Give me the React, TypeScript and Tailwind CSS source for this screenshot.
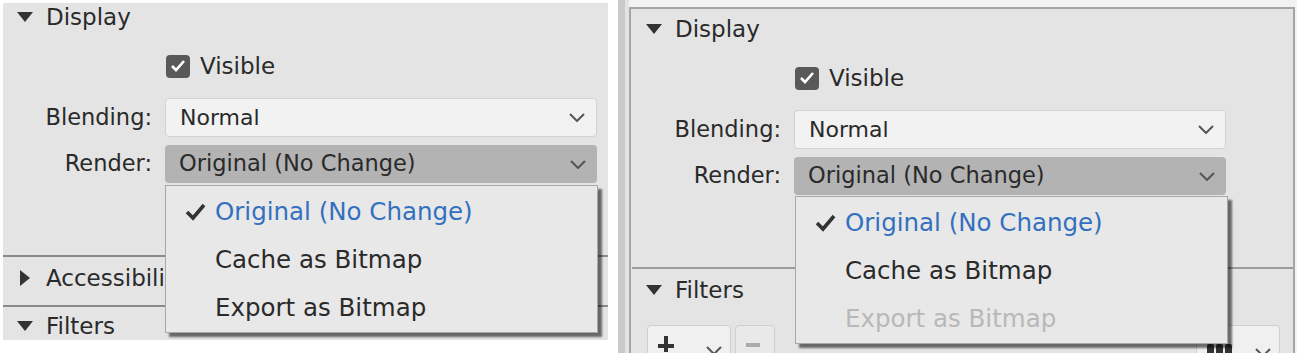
import React from 'react';

const font = { fontFamily: '"DejaVu Sans", Verdana, sans-serif' };

const DownTri = () => (
  <svg width="16" height="10" viewBox="0 0 16 10" className="shrink-0">
    <polygon points="0,0 16,0 8,10" fill="#333" />
  </svg>
);

const RightTri = () => (
  <svg width="10" height="16" viewBox="0 0 10 16" className="shrink-0 ml-[3px] mr-[3px]">
    <polygon points="0,0 10,8 0,16" fill="#333" />
  </svg>
);

const Chevron = () => (
  <svg width="16" height="9" viewBox="0 0 16 9" className="shrink-0">
    <polyline points="1,1 8,8 15,1" fill="none" stroke="#555" strokeWidth="2" />
  </svg>
);

const Header: React.FC<{ label: string; open?: boolean; className?: string }> = ({ label, open = true, className }) => (
  <div className={`flex items-center gap-[13px] pl-[14px] text-[23px] text-[#2a2a2a] ${className ?? ''}`}>
    {open ? <DownTri /> : <RightTri />}
    <span>{label}</span>
  </div>
);

interface PanelProps {
  right?: boolean;
}

const Panel: React.FC<PanelProps> = ({ right }) => {
  return (
    <div className={`relative ${right ? 'pt-[6px] pl-[1px]' : ''}`}>
      <Header label="Display" className="h-[28px]" />

      <div className="mt-[21px] h-[28px] flex items-center pl-[163px] gap-[10px]">
        <div className="w-[24px] h-[23px] rounded-[4px] bg-[#595959] flex items-center justify-center">
          <svg width="16" height="14" viewBox="0 0 16 14">
            <polyline points="2,7 6,11 14,2" fill="none" stroke="#fff" strokeWidth="2.6" />
          </svg>
        </div>
        <span className="text-[23px] text-[#2a2a2a]">Visible</span>
      </div>

      <div className="mt-[18px] flex items-center h-[39px]">
        <div className="w-[149px] text-right text-[22.5px] text-[#2a2a2a]">Blending:</div>
        <div className="ml-[13px] w-[432px] h-full rounded-[4px] border border-[#d2d2d2] bg-[#f2f2f2] flex items-center justify-between pl-[14px] pr-[11px] text-[22px] text-[#2a2a2a]">
          <span>Normal</span>
          <Chevron />
        </div>
      </div>

      <div className="mt-[8px] flex items-center h-[38px]">
        <div className="w-[149px] text-right text-[22.5px] text-[#2a2a2a]">Render:</div>
        <div className="ml-[13px] w-[432px] h-full rounded-[4px] bg-[#b3b3b3] flex items-center justify-between pl-[14px] pr-[11px] text-[22.5px] text-[#2a2a2a]">
          <span>Original (No Change)</span>
          <Chevron />
        </div>
      </div>

      <div className={`mt-[72px] border-t-2 ${right ? 'border-[#9c9c9c]' : 'border-[#8a8a8a]'}`} />

      {right ? (
        <>
          <Header label="Filters" className="h-[48px] pb-[6px]" />
          <div className="mt-[8px] flex items-start pl-[15px] pr-[13px]">
            <div className="w-[84px] h-[40px] rounded-[4px] border border-[#cfcfcf] bg-[#f0f0f0] flex items-start pt-[10px] pl-[10px] gap-[32px]">
              <svg width="16" height="16" viewBox="0 0 16 16">
                <rect x="6" y="0" width="4" height="16" fill="#333" />
                <rect x="0" y="8" width="16" height="4" fill="#333" />
              </svg>
              <div className="pt-[10px]">
                <Chevron />
              </div>
            </div>
            <div className="ml-[4px] w-[40px] h-[40px] rounded-[4px] border border-[#cfcfcf] bg-[#e9e9e9] flex items-start pt-[17px] pl-[10px]">
              <div className="w-[14px] h-[4px] bg-[#ababab]" />
            </div>
            <div className="ml-auto w-[84px] h-[40px] rounded-[4px] border border-[#cfcfcf] bg-[#f0f0f0] flex items-start pt-[18px] pl-[8px] gap-[22px]">
              <svg width="28" height="12" viewBox="0 0 28 12">
                <rect x="2" y="0" width="7" height="12" rx="2" fill="#333" />
                <rect x="11" y="0" width="7" height="12" rx="2" fill="#333" />
                <rect x="20" y="0" width="7" height="12" rx="2" fill="#333" />
              </svg>
              <div className="pt-[4px]">
                <Chevron />
              </div>
            </div>
          </div>
        </>
      ) : (
        <>
          <Header label="Accessibility" open={false} className="h-[48px] pb-[6px]" />
          <div className="border-t-2 border-[#8a8a8a]" />
          <Header label="Filters" className="h-[40px] pb-[2px]" />
        </>
      )}

      {/* open render dropdown */}
      <div
        className={`absolute w-[433px] pt-[2px] bg-[#e8e8e8] border border-[#a8a8a8] shadow-[4px_4px_2px_rgba(0,0,0,0.55)] text-[24.5px] ${
          right ? 'left-[164px] top-[187px]' : 'left-[162px] top-[182px]'
        }`}
      >
        <div className="h-[48px] flex items-center text-[#3370bf]">
          <div className="w-[49px] flex justify-end pr-[9px]">
            <svg width="21" height="18" viewBox="0 0 21 18">
              <polyline points="2,9 8,15 19,2" fill="none" stroke="#333" strokeWidth="3.6" />
            </svg>
          </div>
          <span>Original (No Change)</span>
        </div>
        <div className="h-[48px] flex items-center pl-[49px] text-[#2a2a2a]">Cache as Bitmap</div>
        <div className={`h-[48px] flex items-center pl-[49px] ${right ? 'text-[#b8b8b8]' : 'text-[#2a2a2a]'}`}>
          Export as Bitmap
        </div>
      </div>
    </div>
  );
};

const App: React.FC = () => {
  return (
    <div className="w-[1299px] h-[353px] bg-white flex overflow-hidden" style={font}>
      <div className="ml-[3px] mt-[3px] w-[605px] h-[337px] bg-[#e4e4e4] overflow-hidden shrink-0">
        <Panel />
      </div>

      <div className="ml-[10px] w-[679px] h-[353px] flex bg-[#f2f2f2] shrink-0">
        <div className="w-[7px] bg-[#c9c9c9]" />
        <div className="w-[4px] bg-[#e3e3e3]" />
        <div className="mt-[7px] w-[666px] h-[346px] border-l-2 border-t-2 border-r-2 border-[#a6a6a6] bg-[#e4e4e4] overflow-hidden">
          <Panel right />
        </div>
      </div>
    </div>
  );
};

export default App;
